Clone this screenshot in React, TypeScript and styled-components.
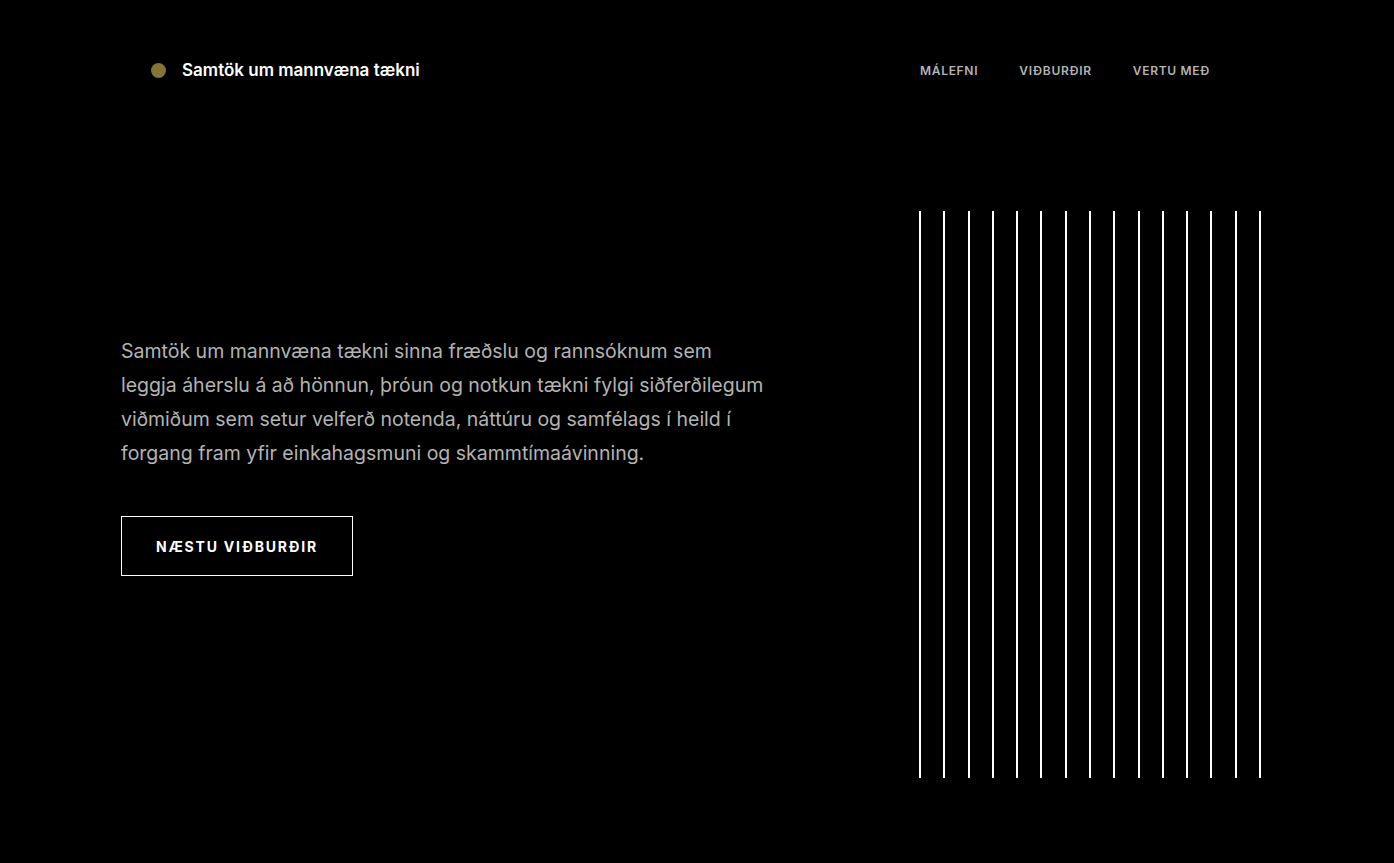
import React from "react";
import styled, { createGlobalStyle } from "styled-components";

const Global = createGlobalStyle`
  html, body { margin: 0; padding: 0; background: #000; }
  body { font-family: "Inter", "Noto Sans", sans-serif; color: #fff; }
  * { box-sizing: border-box; }
`;

const Page = styled.div`
  width: 1394px;
  height: 863px;
  background: #000;
  overflow: hidden;
`;

const Header = styled.header`
  display: flex;
  align-items: center;
  justify-content: space-between;
  height: 140px;
  padding: 0 184px 0 151px;
`;

const Brand = styled.a`
  display: flex;
  align-items: center;
  gap: 16px;
  color: #fff;
  text-decoration: none;
  font-size: 17px;
  font-weight: 600;
  letter-spacing: 0;
`;

const Dot = styled.span`
  width: 15px;
  height: 15px;
  border-radius: 50%;
  background: #857435;
`;

const Nav = styled.nav`
  display: flex;
  gap: 41px;
`;

const NavLink = styled.a`
  color: #b4b4b4;
  text-decoration: none;
  font-size: 12px;
  font-weight: 600;
  letter-spacing: 0.7px;
  text-transform: uppercase;
`;

const Hero = styled.section`
  display: flex;
  justify-content: space-between;
  align-items: flex-start;
  padding: 71px 133px 0 121px;
`;

const Copy = styled.div`
  display: flex;
  flex-direction: column;
  align-items: flex-start;
  padding-top: 123px;
  width: 645px;
`;

const Lead = styled.p`
  margin: 0;
  font-size: 19.5px;
  line-height: 34px;
  color: #b3b3b3;
  font-weight: 400;
  letter-spacing: 0;
`;

const Button = styled.a`
  margin-top: 46px;
  display: inline-flex;
  align-items: center;
  justify-content: center;
  width: 232px;
  height: 60px;
  border: 1px solid #fff;
  color: #fff;
  text-decoration: none;
  font-size: 14px;
  font-weight: 700;
  letter-spacing: 1.8px;
`;

const Lines = styled.div`
  display: flex;
  justify-content: space-between;
  width: 342px;
  height: 567px;
`;

const Line = styled.span`
  width: 2px;
  height: 100%;
  background: #fff;
`;

export default function App() {
  return (
    <Page>
      <Global />
      <Header>
        <Brand href="#">
          <Dot />
          Samtök um mannvæna tækni
        </Brand>
        <Nav>
          <NavLink href="#">Málefni</NavLink>
          <NavLink href="#">Viðburðir</NavLink>
          <NavLink href="#">Vertu með</NavLink>
        </Nav>
      </Header>
      <Hero>
        <Copy>
          <Lead>
            Samtök um mannvæna tækni sinna fræðslu og rannsóknum sem leggja áherslu á að hönnun, þróun og notkun tækni fylgi siðferðilegum viðmiðum sem setur velferð notenda, náttúru og samfélags í heild í forgang fram yfir einkahagsmuni og skammtímaávinning.
          </Lead>
          <Button href="#">NÆSTU VIÐBURÐIR</Button>
        </Copy>
        <Lines>
          {Array.from({ length: 15 }).map((_, i) => (
            <Line key={i} />
          ))}
        </Lines>
      </Hero>
    </Page>
  );
}
